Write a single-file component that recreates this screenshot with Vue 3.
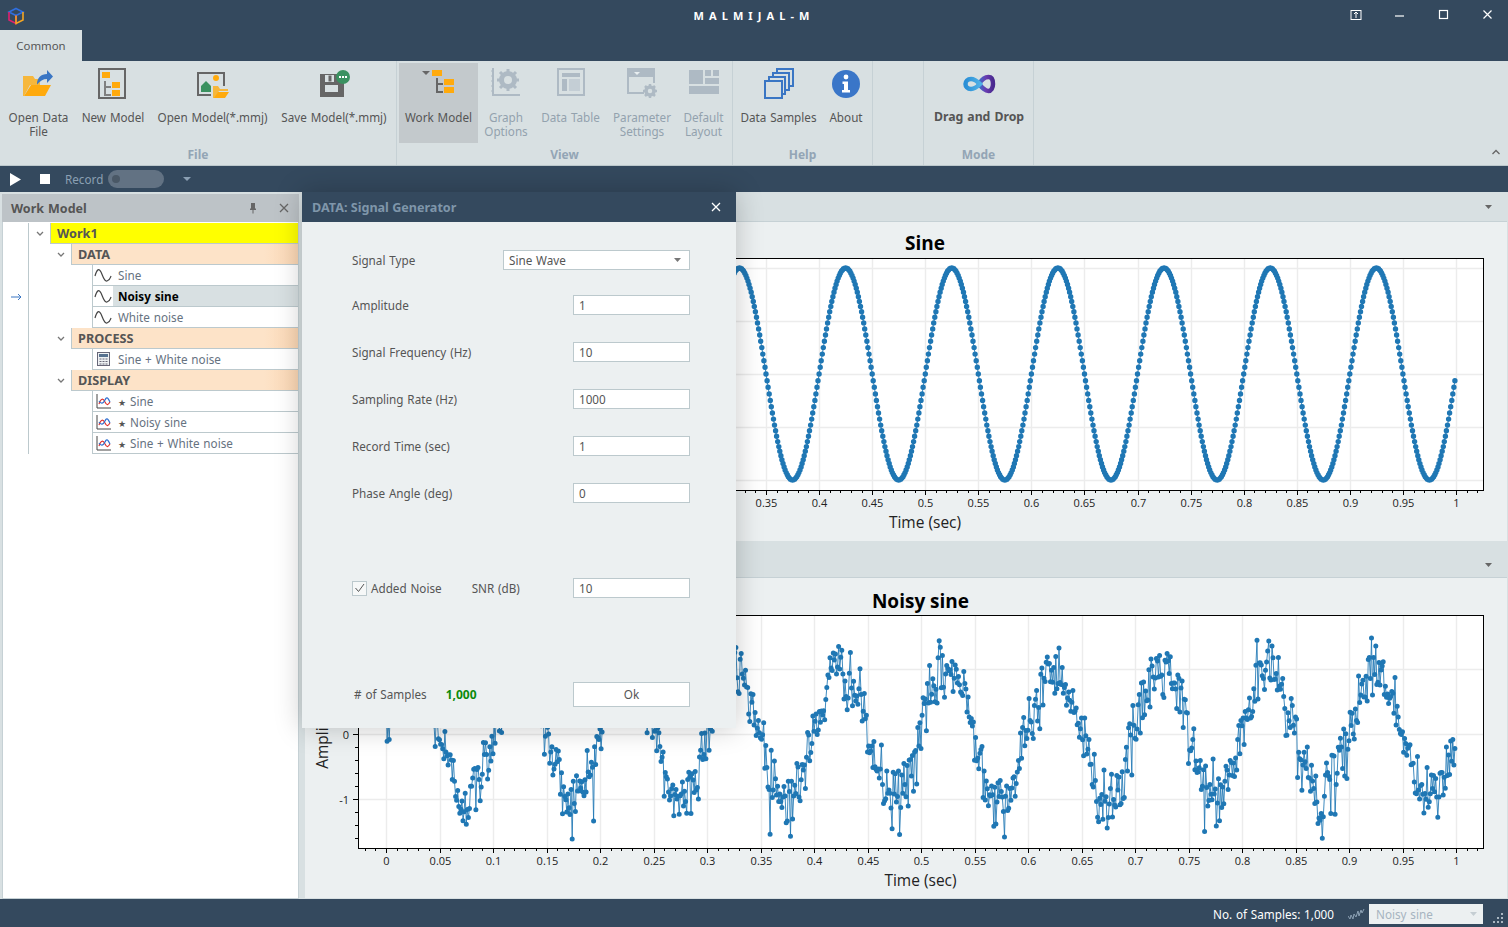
<template>
  <div class="app">
    <!-- title bar + tab -->
    <header class="titlebar">
      <div class="titlerow">
        <svg class="logo" width="18" height="18" viewBox="0 0 18 18" fill="none" stroke-width="1.6">
          <path d="M9 1.5 16 5 9 8.5 2 5Z" stroke="#2f6fe0" />
          <path d="M2 5v8l7 3.5V8.5" stroke="#e0206e" />
          <path d="M16 5v8l-7 3.5V8.5" stroke="#f5a623" />
        </svg>
        <div class="apptitle">MALMIJAL-M</div>
        <div class="winbtns">
          <svg width="12" height="12" viewBox="0 0 12 12" fill="none" stroke="#fff"><rect x="1" y="1.5" width="10" height="9" /><path d="M6 9V3.5M4 5l2-2 2 2" /></svg>
          <svg width="12" height="12" viewBox="0 0 12 12" stroke="#fff"><path d="M1 7h9" stroke-width="1.2" /></svg>
          <svg width="12" height="12" viewBox="0 0 12 12" fill="none" stroke="#fff"><rect x="1.5" y="1.5" width="8" height="8" stroke-width="1.2" /></svg>
          <svg width="12" height="12" viewBox="0 0 12 12" stroke="#fff"><path d="M1.5 1.5l8 8M9.5 1.5l-8 8" stroke-width="1.2" /></svg>
        </div>
      </div>
      <div class="tab">Common</div>
    </header>

    <!-- ribbon -->
    <section class="ribbon">
      <div class="group g-file">
        <div class="items">
          <div class="item">
            <svg width="32" height="32" viewBox="0 0 32 32">
              <path d="M0 9h10l2 3h5v6H7L1 29H0Z" fill="#f6b73c" />
              <path d="M8 18h20l-6 11H1Z" fill="#ffaa0d" />
              <path d="M14 17c0-6 4-10 10-10V3l6 6.500-6 6.500v-4c-4 0-7 2-10 5.500Z" fill="#3a76c4" />
            </svg>
            <span>Open Data<br />File</span>
          </div>
          <div class="item">
            <svg width="32" height="32" viewBox="0 0 32 32">
              <rect x="2" y="2" width="26" height="29" fill="none" stroke="#666" stroke-width="2" />
              <rect x="5" y="5" width="8" height="6" fill="#ffaa0d" />
              <rect x="15" y="15" width="8" height="6" fill="#ffaa0d" />
              <rect x="15" y="23" width="8" height="6" fill="#ffaa0d" />
              <path d="M8 14v14h6M8 20h6" fill="none" stroke="#808080" stroke-width="2" />
            </svg>
            <span>New Model</span>
          </div>
          <div class="item">
            <svg width="34" height="32" viewBox="0 0 34 32">
              <path d="M15 28H2V6H28V19" fill="none" stroke="#666" stroke-width="2" />
              <path d="M5 25V19l5-5 5 5v6Z" fill="#3a9160" />
              <circle cx="20" cy="11" r="3" fill="#ffaa0d" />
              <path d="M17 19h5l2 3h8v2H23l-4 7h-2Z" fill="#f6b73c" />
              <path d="M22 25h11l-4 6H18Z" fill="#ffaa0d" />
            </svg>
            <span>Open Model(*.mmj)</span>
          </div>
          <div class="item">
            <svg width="34" height="32" viewBox="0 0 34 32">
              <rect x="3" y="7" width="24" height="23" fill="#666" />
              <rect x="8" y="8" width="9" height="7" fill="#d8e0e2" />
              <rect x="11.500" y="8.500" width="3" height="6" fill="#666" />
              <rect x="8" y="18" width="13" height="7" fill="#d8e0e2" />
              <circle cx="26" cy="10" r="7" fill="#3a9160" />
              <path d="M22 10h2M25 10h2M28 10h2" stroke="#fff" stroke-width="2" />
            </svg>
            <span>Save Model(*.mmj)</span>
          </div>
        </div>
        <div class="grouplabel">File</div>
      </div>

      <div class="group g-view">
        <div class="items">
          <div class="item active">
            <svg width="34" height="32" viewBox="0 0 34 32">
              <path d="M0 4h8l-4 4Z" fill="#666" />
              <rect x="10" y="3" width="10" height="6" fill="#ffaa0d" />
              <rect x="22" y="12" width="10" height="6" fill="#ffaa0d" />
              <rect x="22" y="20" width="10" height="6" fill="#ffaa0d" />
              <path d="M15 11v14h6M15 17h6" fill="none" stroke="#666" stroke-width="2" />
            </svg>
            <span>Work Model</span>
          </div>
          <div class="item off">
            <svg width="32" height="32" viewBox="0 0 32 32">
              <path d="M3 1v27h27" fill="none" stroke="#aebac4" stroke-width="2" />
              <path d="M1 4h3M1 9h3M1 14h3M1 19h3M1 24h3" stroke="#aebac4" />
              <circle cx="18" cy="13" r="6.500" fill="none" stroke="#aebac4" stroke-width="5" />
              <path d="M18 2v4M18 20v4M7 13h4M25 13h4M10 5l3 3M23 18l3 3M26 5l-3 3M13 18l-3 3" stroke="#aebac4" stroke-width="3" />
            </svg>
            <span>Graph<br />Options</span>
          </div>
          <div class="item off">
            <svg width="32" height="32" viewBox="0 0 32 32">
              <rect x="3" y="2" width="26" height="26" fill="none" stroke="#aebac4" stroke-width="2" />
              <rect x="7" y="6" width="18" height="4" fill="#aebac4" />
              <rect x="7" y="12" width="5" height="12" fill="#aebac4" />
              <rect x="14" y="12" width="11" height="12" fill="#c4ced5" />
            </svg>
            <span>Data Table</span>
          </div>
          <div class="item off">
            <svg width="32" height="32" viewBox="0 0 32 32">
              <path d="M18 26H2V2h26v14" fill="none" stroke="#aebac4" stroke-width="2" />
              <rect x="2" y="2" width="26" height="8" fill="#aebac4" />
              <path d="M8 5h6l-3 3Z" fill="#e8eef0" />
              <circle cx="24" cy="24" r="4" fill="none" stroke="#aebac4" stroke-width="3.500" />
              <path d="M24 17v3M24 28v3M17 24h3M28 24h3M19 19l2 2M27 27l2 2M29 19l-2 2M21 27l-2 2" stroke="#aebac4" stroke-width="2.500" />
            </svg>
            <span>Parameter<br />Settings</span>
          </div>
          <div class="item off">
            <svg width="32" height="32" viewBox="0 0 32 32" fill="#aebac4">
              <rect x="1" y="3" width="14" height="14" />
              <rect x="17" y="3" width="6" height="6" />
              <rect x="25" y="3" width="6" height="6" />
              <rect x="17" y="11" width="14" height="6" />
              <rect x="1" y="19" width="30" height="8" />
            </svg>
            <span>Default<br />Layout</span>
          </div>
        </div>
        <div class="grouplabel">View</div>
      </div>

      <div class="group g-help">
        <div class="items">
          <div class="item">
            <svg width="32" height="32" viewBox="0 0 32 32" fill="#d8e0e2" stroke="#3a76c4" stroke-width="2">
              <rect x="14" y="2" width="16" height="17" />
              <rect x="10" y="6" width="16" height="17" />
              <rect x="6" y="10" width="16" height="17" />
              <rect x="2" y="14" width="17" height="17" />
            </svg>
            <span>Data Samples</span>
          </div>
          <div class="item">
            <svg width="32" height="32" viewBox="0 0 32 32">
              <circle cx="16" cy="17" r="14" fill="#3a76c8" />
              <circle cx="16" cy="10" r="2.400" fill="#fff" />
              <path d="M12.500 14.500H18V23h2v2.500h-8V23h2v-6h-1.500Z" fill="#fff" />
            </svg>
            <span>About</span>
          </div>
        </div>
        <div class="grouplabel">Help</div>
      </div>

      <div class="group g-empty"></div>

      <div class="group g-mode">
        <div class="items">
          <div class="item strong">
            <svg width="34" height="32" viewBox="0 0 34 32" fill="none" stroke-width="4.500">
              <defs>
                <linearGradient id="loopL" x1="0" x2="1" y1="0" y2="0"><stop offset="0" stop-color="#2a8fd6" /><stop offset="1" stop-color="#4fb0e6" /></linearGradient>
                <linearGradient id="loopR" x1="0" x2="1" y1="0" y2="0"><stop offset="0" stop-color="#3c6fc8" /><stop offset=".5" stop-color="#6a3bb0" /><stop offset="1" stop-color="#4a2a90" /></linearGradient>
              </defs>
              <path d="M17 17c3-5 6-7 9.500-7 3 0 4.500 3 4.500 7s-2 7-4.500 7c-3.500 0-6-3-9.500-7Z" stroke="url(#loopR)" />
              <path d="M18 17c-3-3-6-5-9-5-3.500 0-5.500 2.500-5.500 5s2 5 5.500 5c3 0 6-2 9-5Z" stroke="url(#loopL)" />
            </svg>
            <span>Drag and Drop</span>
          </div>
        </div>
        <div class="grouplabel">Mode</div>
      </div>

      <svg class="collapse" width="10" height="6" viewBox="0 0 10 6" fill="none" stroke="#666" stroke-width="1.300"><path d="M1.500 5 5 1.500 8.500 5" /></svg>
    </section>

    <!-- record toolbar -->
    <div class="toolbar">
      <svg width="11" height="13" viewBox="0 0 11 13" class="play"><path d="M0 0l11 6.500L0 13Z" fill="#fff" /></svg>
      <span class="stop"></span>
      <span class="rec">Record</span>
      <span class="toggle"><i></i></span>
      <svg width="8" height="4" viewBox="0 0 8 4" class="caret"><path d="M0 0h8L4 4Z" fill="#8ba0b3" /></svg>
    </div>

    <main class="main">
      <!-- tree -->
      <aside class="tree">
        <div class="treehead">
          <span>Work Model</span>
          <svg width="10" height="12" viewBox="0 0 10 12" class="pin"><path d="M3 1h4v5l1 1v1H2V7l1-1ZM4.500 8h1v3.500h-1Z" fill="#666" /></svg>
          <svg width="10" height="10" viewBox="0 0 10 10" stroke="#666" stroke-width="1.300"><path d="M1 1l8 8M9 1L1 9" /></svg>
        </div>
        <div class="rows">
          <div v-for="r in rows" :key="r.id" class="row" :class="'lv' + r.level">
            <div class="ind">
              <svg v-if="r.current" width="11" height="8" viewBox="0 0 11 8" fill="none" stroke="#3a76c4"><path d="M0 4h10M7 1l3 3-3 3" /></svg>
            </div>
            <div class="spacer">
              <svg v-if="r.level < 2" class="chev" width="8" height="5" viewBox="0 0 8 5" fill="none" stroke="#777" stroke-width="1.300"><path d="M1 1l3 3 3-3" /></svg>
            </div>
            <div v-if="r.level === 0" class="cell root">{{ r.label }}</div>
            <div v-else-if="r.level === 1" class="cell grp">{{ r.label }}</div>
            <div v-else class="cell leaf">
              <span class="leaficon">
                <svg v-if="r.icon === 'wave'" width="18" height="16" viewBox="0 0 18 16" fill="none" stroke="#444" stroke-width="1.200"><path d="M1 9C3 2 5 1 7 5s3 10 6 9 3-2 4-5" /></svg>
                <svg v-else-if="r.icon === 'calc'" width="13" height="14" viewBox="0 0 13 14"><rect x=".5" y=".5" width="12" height="13" fill="#eef1f3" stroke="#667" /><rect x="2" y="2" width="9" height="3" fill="#56718f" /><path d="M2.500 7h2M5.500 7h2M8.500 7h2M2.500 9.500h2M5.500 9.500h2M8.500 9.500h2M2.500 12h2M5.500 12h2M8.500 12h2" stroke="#667" /></svg>
                <svg v-else width="15" height="15" viewBox="0 0 15 15" fill="none"><path d="M1 0v14h14" stroke="#444" /><path d="M3 10c2-6 4-6 6-2s3 3 5 0" stroke="#e0302a" stroke-width="1.200" /><path d="M3 7c2 3 4 3 6-1s3-2 5 2" stroke="#2f6fd0" stroke-width="1.200" /></svg>
              </span>
              <span class="leaftext" :class="{ sel: r.current }"><span v-if="r.star" class="star">★</span>{{ r.label }}</span>
            </div>
          </div>
        </div>
      </aside>

      <!-- charts -->
      <div class="charts">
        <div class="charthead first"><svg width="7" height="4" viewBox="0 0 7 4"><path d="M0 0h7L3.500 4Z" fill="#666" /></svg></div>
        <div v-for="c in charts" :key="c.title" class="chartwrap">
          <svg class="plot" :width="1202" :height="c.h" :viewBox="`305 ${c.top} 1202 ${c.h}`">
            <text class="ttl" :x="(c.left + c.right) / 2" :y="c.titleY" text-anchor="middle">{{ c.title }}</text>
            <rect :x="c.left" :y="c.y0" :width="c.right - c.left" :height="c.y1 - c.y0" fill="#fff" />
            <path :d="c.grid" stroke="#ececec" stroke-width="1.400" fill="none" />
            <path :d="c.linePath" stroke="#1f77b4" stroke-width="1" stroke-opacity=".85" fill="none" />
            <path :d="c.dotPath" stroke="#1f77b4" :stroke-width="c.dot" stroke-linecap="round" fill="none" />
            <rect :x="c.left + .5" :y="c.y0 + .5" :width="c.right - c.left" :height="c.y1 - c.y0" fill="none" stroke="#000" />
            <path :d="c.ticks" stroke="#000" fill="none" />
            <text v-for="t in c.xLabels" :key="t.s" class="tick" :x="t.x" :y="c.y1 + 17" text-anchor="middle">{{ t.s }}</text>
            <text v-for="t in c.yLabels" :key="t.s" class="tick" :x="c.left - 9" :y="t.y + 4" text-anchor="end">{{ t.s }}</text>
            <text class="axis" :x="(c.left + c.right) / 2" :y="c.y1 + 38" text-anchor="middle">Time (sec)</text>
            <text v-if="c.showYTitle" class="axis" text-anchor="middle" :transform="`translate(${c.left - 30} ${(c.y0 + c.y1) / 2}) rotate(-90)`">Amplitude</text>
          </svg>
          <div v-if="c.bar" class="charthead second"><svg width="7" height="4" viewBox="0 0 7 4"><path d="M0 0h7L3.500 4Z" fill="#666" /></svg></div>
        </div>
      </div>

      <!-- dialog, floats over the charts -->
      <div class="dialog">
        <div class="dlghead">
          <span>DATA: Signal Generator</span>
          <svg width="10" height="10" viewBox="0 0 10 10" stroke="#fff" stroke-width="1.300"><path d="M1 1l8 8M9 1L1 9" /></svg>
        </div>
        <div class="dlgbody">
          <div class="frow selrow">
            <label>Signal Type</label>
            <div class="select">Sine Wave <svg width="7" height="4" viewBox="0 0 7 4"><path d="M0 0h7L3.500 4Z" fill="#777" /></svg></div>
          </div>
          <div v-for="f in fields" :key="f.label" class="frow">
            <label>{{ f.label }}</label>
            <div class="input">{{ f.value }}</div>
          </div>
          <div class="frow noiserow">
            <span class="check"><svg width="11" height="10" viewBox="0 0 11 10" fill="none" stroke="#555"><path d="M1.500 5l3 3.500L10 1" /></svg></span>
            <label class="noise">Added Noise</label>
            <label class="snr">SNR (dB)</label>
            <div class="input">10</div>
          </div>
          <div class="frow okrow">
            <label class="samples"># of Samples</label>
            <b class="count">1,000</b>
            <div class="okbtn">Ok</div>
          </div>
        </div>
      </div>
    </main>

    <footer class="status">
      <span class="stat">No. of Samples: 1,000</span>
      <svg width="17" height="12" viewBox="0 0 17 12" fill="none" stroke="#8ba0b3"><path d="M0 8l2 3 1-4 2 4 1-5 2 3 2-6 1 5 2-6 1 3 2-4" /></svg>
      <div class="combo">Noisy sine <svg width="7" height="4" viewBox="0 0 7 4"><path d="M0 0h7L3.500 4Z" fill="#c5ced3" /></svg></div>
      <svg class="grip" width="12" height="11" viewBox="0 0 12 11" fill="#a9b6c1"><rect x="9" y="0" width="2" height="2" /><rect x="5" y="4" width="2" height="2" /><rect x="9" y="4" width="2" height="2" /><rect x="1" y="8" width="2" height="2" /><rect x="5" y="8" width="2" height="2" /><rect x="9" y="8" width="2" height="2" /></svg>
    </footer>
  </div>
</template>

<script setup>
const rows = [
  { id: 1, level: 0, label: "Work1" },
  { id: 2, level: 1, label: "DATA" },
  { id: 3, level: 2, label: "Sine", icon: "wave" },
  { id: 4, level: 2, label: "Noisy sine", icon: "wave", current: true },
  { id: 5, level: 2, label: "White noise", icon: "wave" },
  { id: 6, level: 1, label: "PROCESS" },
  { id: 7, level: 2, label: "Sine + White noise", icon: "calc" },
  { id: 8, level: 1, label: "DISPLAY" },
  { id: 9, level: 2, label: "Sine", icon: "chart", star: true },
  { id: 10, level: 2, label: "Noisy sine", icon: "chart", star: true },
  { id: 11, level: 2, label: "Sine + White noise", icon: "chart", star: true },
];

const fields = [
  { label: "Amplitude", value: "1" },
  { label: "Signal Frequency (Hz)", value: "10" },
  { label: "Sampling Rate (Hz)", value: "1000" },
  { label: "Record Time (sec)", value: "1" },
  { label: "Phase Angle (deg)", value: "0" },
];

// small seeded generator so the noisy trace is the same on every load
let seed = 12345;
function rnd() {
  seed = (seed * 1664525 + 1013904223) % 4294967296;
  return seed / 4294967296;
}
function gauss() {
  return Math.sqrt(-2 * Math.log(rnd() + 1e-9)) * Math.cos(2 * Math.PI * rnd());
}

// labels under the open dialog can't be seen, no point drawing them
const underDialog = (x, y) => x < 736 && y < 728;

function makeChart(o) {
  const X = (t) => o.x0 + t * o.xs;
  const Y = (v) => o.yc - v * o.ys;
  let line = "";
  let dots = "";
  for (let i = 0; i < 1000; i++) {
    const t = i / 1000;
    const v = Math.sin(2 * Math.PI * 10 * t) + (o.noise ? gauss() * o.noise : 0);
    const x = X(t).toFixed(1);
    const y = Y(v).toFixed(1);
    line += (i ? "L" : "M") + x + " " + y;
    dots += `M${x} ${y}h0`;
  }

  let grid = "";
  let ticks = "";
  const xLabels = [];
  const yLabels = [];
  for (let i = -5; i <= 105; i++) {
    const x = Math.round(X(i / 100)) + 0.5;
    if (x < o.left || x > o.right) continue;
    const major = i % 5 === 0;
    ticks += `M${x} ${o.y1}v${major ? 5 : 3}`;
    if (major && i >= 0 && i <= 100) {
      grid += `M${x} ${o.y0}V${o.y1}`;
      if (!underDialog(x, o.y1 + 12)) xLabels.push({ x, s: String(i / 100) });
    }
  }
  const steps = Math.round(o.ymax / o.yminor);
  for (let i = -steps; i <= steps; i++) {
    const v = i * o.yminor;
    const y = Math.round(Y(v)) + 0.5;
    if (y < o.y0 || y > o.y1) continue;
    const major = i % o.ymajorEvery === 0;
    ticks += `M${o.left} ${y}h-${major ? 5 : 3}`;
    if (major) {
      grid += `M${o.left} ${y}H${o.right}`;
      if (!underDialog(o.left - 9, y)) yLabels.push({ y, s: String(+v.toFixed(1)) });
    }
  }
  return { ...o, grid, ticks, xLabels, yLabels, linePath: line, dotPath: dots };
}

const charts = [
  makeChart({
    title: "Sine", top: 222, h: 319, bar: true, titleY: 250, showYTitle: false,
    left: 367, right: 1483, y0: 258, y1: 490,
    x0: 394.5, xs: 1061.5, yc: 374, ys: 106,
    ymax: 1.1, yminor: 0.1, ymajorEvery: 5, noise: 0, dot: 5.4,
  }),
  makeChart({
    title: "Noisy sine", top: 578, h: 320, bar: false, titleY: 608, showYTitle: true,
    left: 358, right: 1483, y0: 615, y1: 848,
    x0: 386, xs: 1070, yc: 734, ys: 65,
    ymax: 2, yminor: 0.2, ymajorEvery: 5, noise: 0.24, dot: 5,
  }),
];
</script>

<style>
html, body { margin: 0; height: 100%; overflow: hidden; background: #34495e; }
</style>

<style scoped>
.app { position: relative; display: flex; flex-direction: column; height: 927px; overflow: hidden; font: 11.700px "Noto Sans", sans-serif; word-spacing: .8px; color: #555; background: #d8e0e2; }

.titlebar { height: 61px; background: #34495e; flex: none; }
.titlerow { position: relative; height: 30px; display: flex; align-items: center; }
.logo { position: absolute; left: 7px; top: 7px; }
.apptitle { width: 100%; text-align: center; color: #fff; font: bold 11px "Noto Sans", sans-serif; letter-spacing: 5.100px; }
.winbtns { position: absolute; right: 14px; top: 9px; display: flex; gap: 32px; }
.tab { width: 82px; height: 31px; line-height: 31px; text-align: center; background: #d8e0e2; font-size: 11.400px; }

.ribbon { position: relative; display: flex; height: 104px; flex: none; background: #d8e0e2; border-bottom: 1px solid #bcc8cc; }
.group { display: flex; flex-direction: column; border-right: 1px solid #c6d1d5; box-sizing: border-box; }
.g-file { width: 397px; }
.g-view { width: 336px; }
.g-help { width: 140px; }
.g-empty { width: 51px; }
.g-mode { width: 110px; }
.items { display: grid; height: 82px; padding: 2px 0 0 2px; }
.g-file .items { grid-template-columns: 73px 76px 123px 120px; }
.g-view .items { grid-template-columns: 79px 56px 73px 70px 53px; }
.g-help .items { grid-template-columns: 87px 48px; }
.g-mode .items { grid-template-columns: 110px; padding-left: 0; }
.item { display: flex; flex-direction: column; align-items: center; text-align: center; line-height: 14px; padding-top: 4px; height: 76px; box-sizing: border-box; white-space: nowrap; }
.item svg { height: 32px; margin-bottom: 11px; flex: none; }
.item.active { background: #c3c9cc; height: 80px; }
.item.off { color: #93a2ae; }
.item.strong { font-weight: bold; font-size: 12.300px; }
.grouplabel { text-align: center; font-weight: bold; font-size: 12px; color: #93a5b5; line-height: 20px; }
.collapse { position: absolute; right: 7px; bottom: 10px; }

.toolbar { display: flex; align-items: center; height: 26px; flex: none; background: #34495e; }
.play { margin-left: 10px; }
.stop { width: 10px; height: 10px; background: #fff; margin-left: 19px; }
.rec { color: #8ba0b3; margin-left: 15px; margin-top: -1px; }
.toggle { width: 56px; height: 18px; margin-left: 5px; border-radius: 9px; background: #627283; display: flex; align-items: center; }
.toggle i { width: 8px; height: 8px; border-radius: 50%; background: #4a5866; margin-left: 4px; }
.caret { margin-left: 19px; }

.main { display: flex; height: 708px; flex: none; }

.tree { width: 297px; margin: 2px 0 1px 2px; background: #fff; border-right: 1px solid #c6d1d5; border-bottom: 1px solid #c6d1d5; border-left: 1px solid #c6d1d5; box-sizing: border-box; display: flex; flex-direction: column; }
.treehead { height: 28px; flex: none; margin-left: -1px; margin-right: -1px; background: #bdc3c7; display: flex; align-items: center; padding: 0 10px 0 9px; font: bold 12.500px "Noto Sans", sans-serif; color: #555; }
.treehead span { flex: 1; }
.pin { margin-right: 21px; }
.rows { padding-top: 1px; }
.row { display: flex; height: 21px; box-sizing: border-box; }
.ind { width: 26px; flex: none; border-right: 1px solid #bcc9cd; display: flex; align-items: center; justify-content: center; padding-left: 1px; box-sizing: border-box; }
.spacer { flex: none; display: flex; align-items: center; justify-content: center; }
.lv0 .spacer { width: 21px; }
.lv1 .spacer { width: 42px; padding-left: 21px; box-sizing: border-box; }
.lv2 .spacer { width: 63px; }
.cell { flex: 1; min-width: 0; display: flex; align-items: center; border-left: 1px solid #bcc9cd; border-bottom: 1px solid #bcc9cd; box-sizing: border-box; white-space: nowrap; }
.root { background: #ffff00; font: bold 12.700px "Noto Sans", sans-serif; color: #555; padding-left: 6px; }
.grp { background: linear-gradient(90deg, #fde3c8, #fde3c8 85%, #fbd7b4); font: bold 12.700px "Noto Sans", sans-serif; color: #555; padding-left: 6px; }
.leaf { color: #66727f; }
.leaficon { width: 20px; height: 20px; flex: none; display: flex; align-items: center; justify-content: center; }
.leaftext { flex: 1; height: 100%; line-height: 21px; padding-left: 5px; }
.leaftext.sel { background: #d8e0e2; color: #000; font-weight: bold; }
.star { display: inline-block; width: 12px; font-size: 9px; color: #555; }

.charts { flex: 1; margin-left: 6px; min-width: 0; background: #d8e0e2; margin-right: 1px; }
.charthead { display: flex; justify-content: flex-end; align-items: center; padding-right: 15px; box-sizing: border-box; background: #d8e0e2; }
.charthead.first { height: 30px; }
.charthead.second { height: 37px; padding-top: 10px; }
.chartwrap { display: block; }
.plot { display: block; background: #ecf0f1; border-top: 1px solid #c6d1d5; box-sizing: content-box; margin-top: -1px; word-spacing: 0; }
.plot text { font-family: "Open Sans", sans-serif; fill: #222; }
.plot .ttl { font-size: 19px; font-weight: 700; fill: #000; }
.plot .tick { font-size: 11px; }
.plot .axis { font-size: 15.500px; }

.dialog { position: absolute; left: 302px; top: 192px; width: 434px; height: 536px; background: #ecf0f1; box-shadow: 0 0 26px rgba(0, 0, 0, .22); }
.dlghead { height: 30px; background: #34495e; display: flex; align-items: center; justify-content: space-between; padding: 0 15px 0 10px; font: bold 12.600px "Noto Sans", sans-serif; color: #7f96aa; word-spacing: 0; }
.dlgbody { padding: 28px 46px 0 50px; }
.frow { display: flex; align-items: center; justify-content: space-between; height: 20px; margin-bottom: 27px; }
.selrow { margin-bottom: 25px; }
.input { width: 117px; height: 20px; line-height: 18px; box-sizing: border-box; background: #fff; border: 1px solid #bcc9cd; padding-left: 5px; }
.select { width: 187px; height: 20px; line-height: 18px; box-sizing: border-box; background: #fff; border: 1px solid #bcc9cd; padding: 0 8px 0 5px; display: flex; align-items: center; justify-content: space-between; }
.noiserow { justify-content: flex-start; margin-top: 75px; margin-bottom: 84px; }
.check { width: 15px; height: 15px; box-sizing: border-box; border: 1px solid #bcc9cd; background: #f6f8f8; display: flex; align-items: center; justify-content: center; margin-right: 4px; }
.snr { margin-left: 30px; }
.noiserow .input { margin-left: auto; }
.okrow { height: 25px; justify-content: flex-start; padding-left: 2px; }
.samples { margin-top: -1px; }
.count { color: #0a8a0a; font-size: 12px; margin-left: 19px; }
.okbtn { margin-left: auto; width: 117px; height: 25px; line-height: 23px; text-align: center; box-sizing: border-box; background: #fff; border: 1px solid #bcc9cd; }

.status { height: 28px; flex: none; background: #34495e; display: flex; align-items: center; justify-content: flex-end; margin-top: -1px; padding-top: 2px; box-sizing: border-box; color: #fff; }
.stat { margin-right: 14px; }
.combo { width: 114px; height: 20px; margin-left: 4px; box-sizing: border-box; background: #ecf0f1; color: #a6b4c0; padding: 0 6px 0 7px; display: flex; align-items: center; justify-content: space-between; }
.grip { margin: 8px 4px 0 9px; }
</style>
